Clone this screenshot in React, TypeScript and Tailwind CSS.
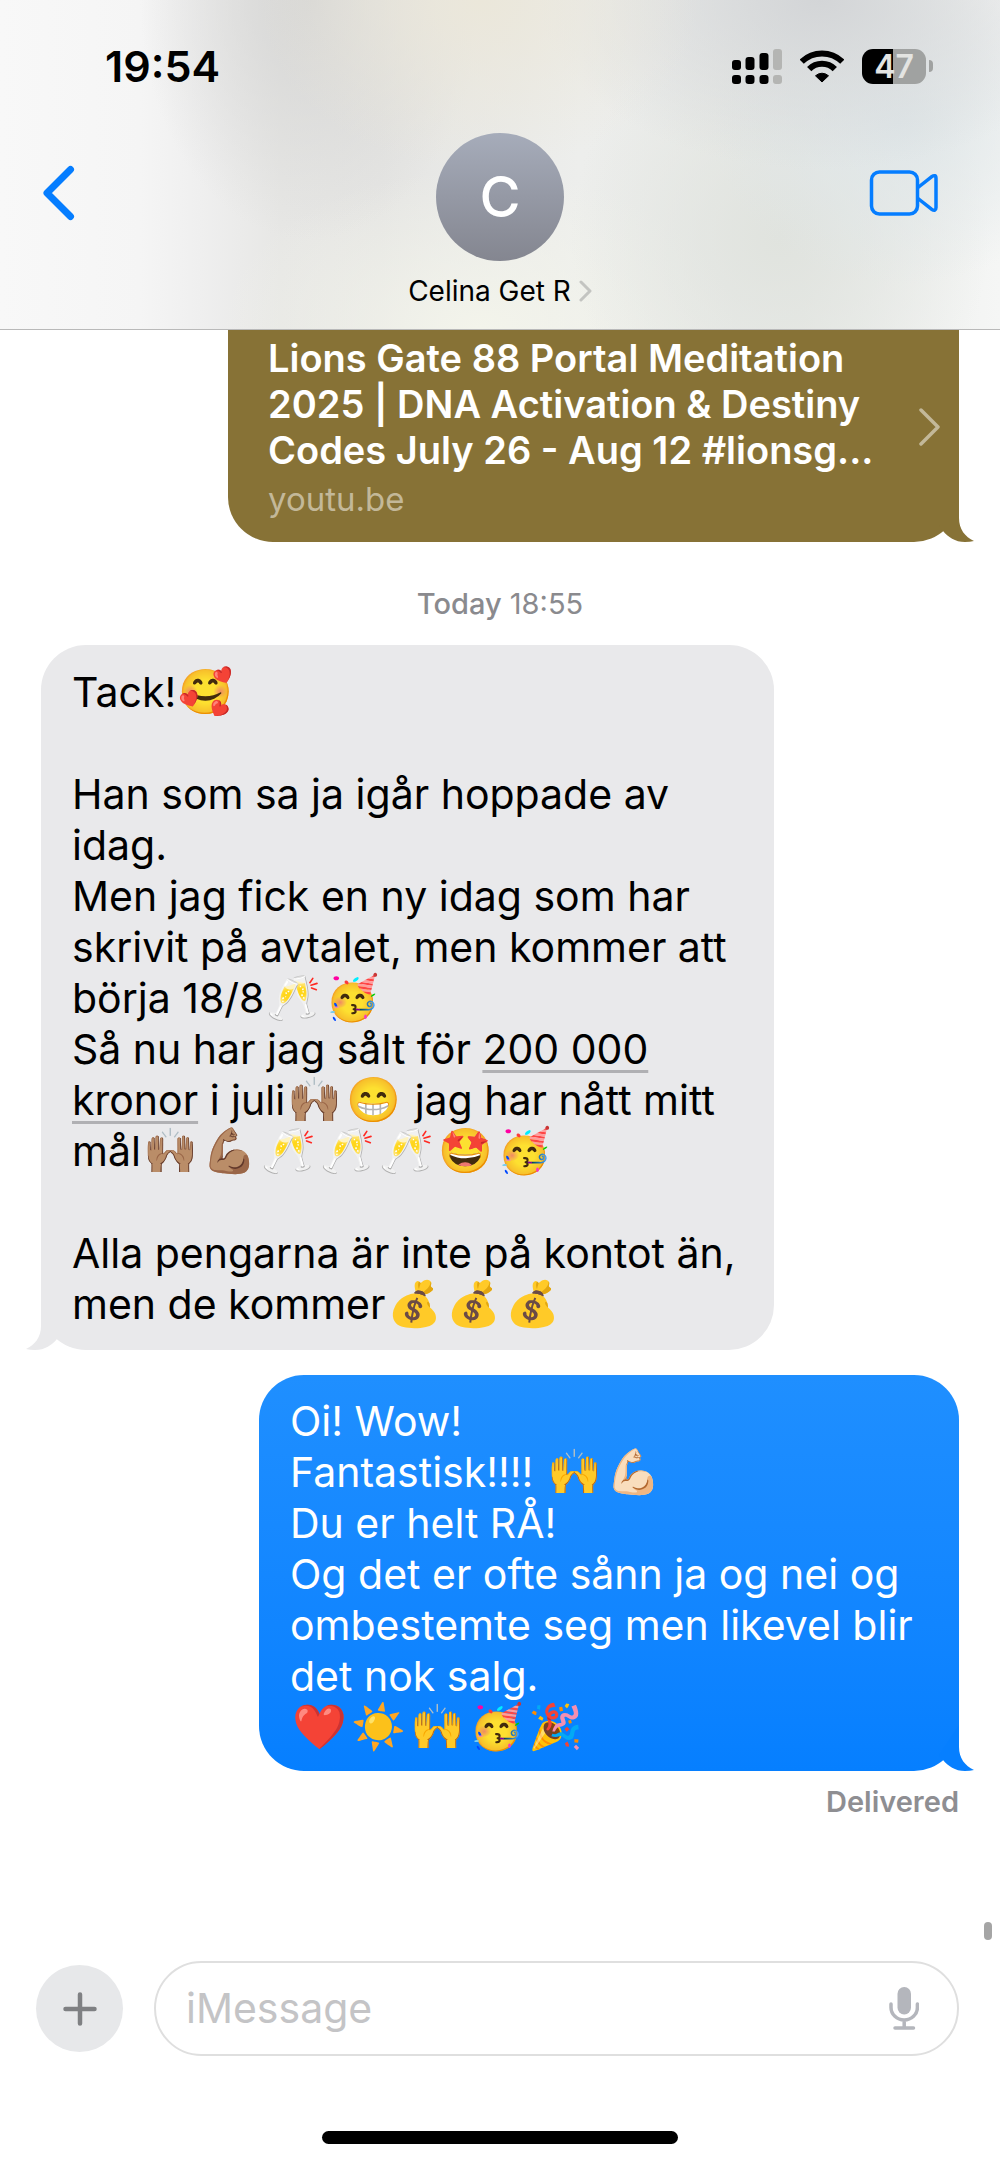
import type { ReactNode } from 'react'

function Emoji({ children }: { children: string }) {
  return <span className="inline-block w-[59px] text-center text-[44px] leading-none">{children}</span>
}

function Line({ children }: { children?: ReactNode }) {
  return <p className="min-h-[51px] whitespace-nowrap">{children}</p>
}

function Tail({ className }: { className: string }) {
  return (
    <svg className={`absolute bottom-0 ${className}`} width="36" height="46" viewBox="0 0 36 46" fill="currentColor" aria-hidden="true">
      <path d="M20 0 V22 C20 33 26 41 35 45 Q31 46 26 46 C16 46 9 41 4 35 L0 30 Z" />
    </svg>
  )
}

function StatusBar() {
  return (
    <div className="flex h-12 items-center justify-between pl-[105px] pr-[67px]">
      <time className="text-[43px] leading-[48px] font-semibold">19:54</time>
      <div className="flex items-center">
        <svg width="50" height="35" viewBox="0 0 50 35" role="img" aria-label="Signal">
          <g fill="#000">
            <rect x="0" y="11" width="9" height="10" rx="3" />
            <rect x="13.5" y="8" width="9" height="13" rx="3" />
            <rect x="27.5" y="4" width="9" height="17" rx="3" />
            <rect x="0" y="26" width="9" height="9" rx="3" />
            <rect x="13.5" y="26" width="9" height="9" rx="3" />
            <rect x="27.5" y="26" width="9" height="9" rx="3" />
          </g>
          <g fill="#b4b5b3">
            <rect x="41" y="0" width="9" height="21" rx="3" />
            <rect x="41" y="26" width="9" height="9" rx="3" />
          </g>
        </svg>
        <svg className="ml-[18px]" width="44" height="33" viewBox="0 0 44 33" role="img" aria-label="Wi-Fi">
          <g fill="none" stroke="#000" strokeWidth="6">
            <path d="M1.7 11.7 A29 29 0 0 1 42.3 11.7" />
            <path d="M9.2 19.2 A18 18 0 0 1 34.8 19.2" />
          </g>
          <path d="M22 32 L15.5 25.8 A9.5 9.5 0 0 1 28.5 25.8 Z" stroke="#000" strokeWidth="1" strokeLinejoin="round" />
        </svg>
        <div className="ml-[18px] flex h-[35px] w-16 items-center justify-center rounded-[11px] bg-[linear-gradient(90deg,#000_48%,#a0a2a1_48%)] text-[32px] leading-[35px] font-semibold text-[#e3e4e2]">
          47
        </div>
        <div className="ml-[3px] h-3 w-1 rounded-r-full bg-[#a0a2a1]" />
      </div>
    </div>
  )
}

function Header() {
  return (
    <header className="border-b border-[#b9b9b9] bg-[radial-gradient(ellipse_220px_170px_at_48%_0%,#ebe7da_0%,#ebe7da00_100%),radial-gradient(ellipse_170px_240px_at_31%_0%,#d6d6d5_0%,#d6d6d500_100%),radial-gradient(ellipse_280px_170px_at_82%_0%,#d3d5d7_0%,#d3d5d700_100%),radial-gradient(ellipse_190px_160px_at_90%_38%,#dfe6e8_0%,#dfe6e800_100%),radial-gradient(ellipse_210px_220px_at_78%_72%,#e0e3de_0%,#e0e3de00_100%),radial-gradient(ellipse_260px_160px_at_48%_100%,#f3f4eb_0%,#f3f4eb00_100%),linear-gradient(90deg,#f8f8f8_0%,#f5f5f5_14%,#efefef_20%,#e7e7e5_28%,#e5e5e3_38%,#edeeec_58%,#e9ebe9_80%,#f5f6f5_100%)] pt-[42px] pb-5">
      <StatusBar />
      <nav className="mt-[43px] grid grid-cols-[1fr_auto_1fr] items-start">
        <button aria-label="Back" className="flex h-[120px] items-center justify-self-start pl-[41px]">
          <svg width="35" height="56" viewBox="0 0 35 56" fill="none" stroke="#057dff" strokeWidth="7" strokeLinecap="round" strokeLinejoin="round">
            <path d="M29.5 4.5 L6 28 L29.5 51.5" />
          </svg>
        </button>
        <button className="flex flex-col items-center">
          <span className="flex size-32 items-center justify-center rounded-full bg-linear-to-b from-[#a6acba] to-[#848690] text-[56px] font-medium text-white">
            C
          </span>
          <span className="mt-3 flex items-center gap-2 text-[28px] leading-9">
            Celina Get R
            <svg width="13" height="22" viewBox="0 0 13 22" fill="none" stroke="#c3c4c1" strokeWidth="3" strokeLinecap="round" strokeLinejoin="round">
              <path d="M2 2 L11 11 L2 20" />
            </svg>
          </span>
        </button>
        <button aria-label="Video call" className="flex h-[120px] items-center justify-self-end pr-[61px]">
          <svg width="70" height="46" viewBox="0 0 70 46" fill="none" stroke="#057dff" strokeWidth="3.5" strokeLinejoin="round">
            <rect x="2.5" y="2" width="46" height="42" rx="8" />
            <path d="M49 17.5 L62.5 6.8 Q67 3.8 67 8.5 V37.5 Q67 42 62.5 39.2 L49 28.5" />
          </svg>
        </button>
      </nav>
    </header>
  )
}

function LinkCard() {
  return (
    <a href="https://youtu.be" className="relative flex w-[731px] max-w-full items-center justify-between self-end rounded-b-[45px] bg-[#877236] pt-[5px] pr-[18px] pb-[23px] pl-10 text-white">
      <div className="whitespace-nowrap">
        <p className="text-[38px] leading-[46px] font-semibold">
          Lions Gate 88 Portal Meditation
          <br />
          2025 | DNA Activation &amp; Destiny
          <br />
          Codes July 26 - Aug 12 #lionsg...
        </p>
        <p className="mt-[6px] text-[33px] leading-10 text-[#c3b899]">youtu.be</p>
      </div>
      <svg width="23" height="38" viewBox="0 0 23 38" fill="none" stroke="#c3b899" strokeWidth="3.5" strokeLinecap="round" strokeLinejoin="round">
        <path d="M3 2 L20 19 L3 36" />
      </svg>
      <Tail className="-right-4 text-[#877236]" />
    </a>
  )
}

export default function App() {
  return (
    <div className="flex min-h-screen flex-col bg-white font-['Inter','Noto_Color_Emoji',sans-serif] text-black">
      <Header />

      <main className="relative flex flex-1 flex-col px-[41px]">
        <LinkCard />

        <p className="mt-[42px] text-center text-[29px] leading-10 text-[#8a8a8e]">
          <span className="font-medium">Today</span> 18:55
        </p>

        {/* Received */}
        <div className="relative mt-[21px] w-[733px] max-w-full self-start rounded-[45px] bg-[#e9e9eb] pt-[22px] pb-5 pl-[31px] text-[41px] leading-[51px]">
          <Line>Tack!<Emoji>🥰</Emoji></Line>
          <Line />
          <Line>Han som sa ja igår hoppade av</Line>
          <Line>idag.</Line>
          <Line>Men jag fick en ny idag som har</Line>
          <Line>skrivit på avtalet, men kommer att</Line>
          <Line>börja 18/8<Emoji>🥂</Emoji><Emoji>🥳</Emoji></Line>
          <Line>
            Så nu har jag sålt för{' '}
            <a href="#amount" className="underline decoration-[#b0b0b3] decoration-[3px] underline-offset-[6px] [text-decoration-skip-ink:none]">200 000</a>
          </Line>
          <Line>
            <a href="#amount" className="underline decoration-[#b0b0b3] decoration-[3px] underline-offset-[6px] [text-decoration-skip-ink:none]">kronor</a>
            {' '}i juli<Emoji>🙌🏽</Emoji><Emoji>😁</Emoji> jag har nått mitt
          </Line>
          <Line>
            mål<Emoji>🙌🏽</Emoji><Emoji>💪🏽</Emoji><Emoji>🥂</Emoji><Emoji>🥂</Emoji><Emoji>🥂</Emoji><Emoji>🤩</Emoji><Emoji>🥳</Emoji>
          </Line>
          <Line />
          <Line>Alla pengarna är inte på kontot än,</Line>
          <Line>men de kommer<Emoji>💰</Emoji><Emoji>💰</Emoji><Emoji>💰</Emoji></Line>
          <Tail className="-left-4 -scale-x-100 text-[#e9e9eb]" />
        </div>

        {/* Sent */}
        <div className="relative mt-[25px] w-[700px] max-w-full self-end rounded-[45px] bg-linear-to-b from-[#1f8fff] to-[#067fff] pt-[21px] pb-[18px] pl-[31px] text-[41px] leading-[51px] text-white">
          <Line>Oi! Wow!</Line>
          <Line>Fantastisk!!!! <Emoji>🙌</Emoji><Emoji>💪🏻</Emoji></Line>
          <Line>Du er helt RÅ!</Line>
          <Line>Og det er ofte sånn ja og nei og</Line>
          <Line>ombestemte seg men likevel blir</Line>
          <Line>det nok salg.</Line>
          <Line><Emoji>❤️</Emoji><Emoji>☀️</Emoji><Emoji>🙌</Emoji><Emoji>🥳</Emoji><Emoji>🎉</Emoji></Line>
          <Tail className="-right-4 text-[#067fff]" />
        </div>

        <p className="mt-[11px] text-right text-[29px] leading-10 font-semibold text-[#8e8e92]">Delivered</p>

        {/* Scroll thumb */}
        <div className="absolute right-2 bottom-0 h-[18px] w-2 rounded-full bg-[#a5a5a5]" />
      </main>

      <footer className="px-[41px] pt-[21px] pb-5">
        <form className="flex items-center gap-[31px]" onSubmit={e => e.preventDefault()}>
          <button type="button" aria-label="Add attachment" className="-ml-[5px] flex size-[87px] items-center justify-center rounded-full bg-[#e7e8ea]">
            <svg width="34" height="34" viewBox="0 0 34 34" stroke="#7f8083" strokeWidth="4.5" strokeLinecap="round">
              <path d="M17 2.5 V31.5 M2.5 17 H31.5" />
            </svg>
          </button>
          <div className="flex h-[95px] min-w-0 flex-1 items-center rounded-full border-2 border-[#dfdfdf] pr-[38px] pl-[30px]">
            <input aria-label="iMessage" placeholder="iMessage" className="min-w-0 flex-1 bg-transparent text-[41px] leading-[51px] outline-none placeholder:text-[#c4c4c6]" />
            <button type="button" aria-label="Dictate">
              <svg width="30" height="43" viewBox="0 0 30 43" fill="none" stroke="#b4b6bc" strokeWidth="3.5" strokeLinecap="round">
                <rect x="8.5" y="0" width="13.5" height="27.5" rx="6.7" fill="#b4b6bc" stroke="none" />
                <path d="M2 17 V20.5 A13.2 12.5 0 0 0 28.4 20.5 V17 M15.2 33 V40 M6 41 H24.5" />
              </svg>
            </button>
          </div>
        </form>
        <div className="mx-auto mt-[75px] h-[13px] w-[356px] rounded-full bg-black" />
      </footer>
    </div>
  )
}
